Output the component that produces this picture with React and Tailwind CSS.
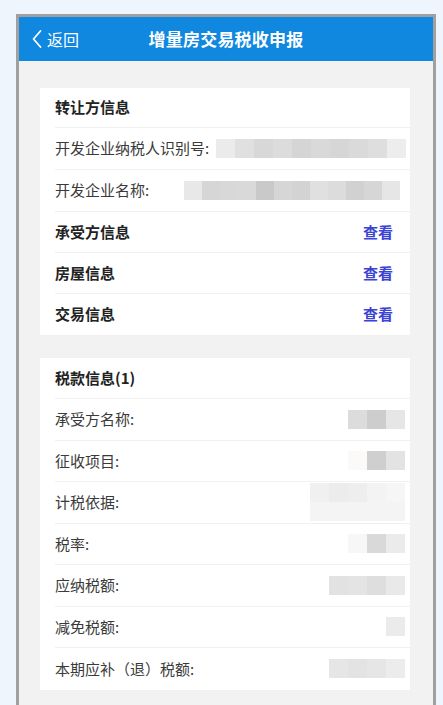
import React from "react";

const card1Rows = [
  {
    label: "开发企业纳税人识别号:",
    offset: 0,
    colors: ["#ebebeb", "#e0e0e0", "#d8d8d8", "#dcdcdc", "#d5d5d5", "#d9d9d9", "#d6d6d6", "#dadada", "#dedede", "#ededed"],
  },
  {
    label: "开发企业名称:",
    offset: -32,
    colors: ["#e8e8e8", "#d6d6d6", "#d8d8d8", "#d9d9d9", "#c9c9c9", "#d6d6d6", "#d3d3d3", "#e0e0e0", "#dcdcdc", "#d1d1d1", "#d6d6d6", "#e6e6e6"],
  },
];

const links = ["承受方信息", "房屋信息", "交易信息"];

const taxRows = [
  { label: "承受方名称:", colors: ["#dcdcdc", "#cdcdcd", "#e6e6e6"] },
  { label: "征收项目:", colors: ["#fbfaf8", "#cfcfcf", "#e3e3e3"] },
  { label: "计税依据:", colors: ["#f0f0f0", "#ececec", "#eeeeee", "#f3f3f3", "#f6f6f6"], tall: true },
  { label: "税率:", colors: ["#f7f7f7", "#d9d9d9", "#ebebeb"] },
  { label: "应纳税额:", colors: ["#e2e2e2", "#e4e4e4", "#dedede", "#e9e9e9"] },
  { label: "减免税额:", colors: ["#ebebeb"] },
  { label: "本期应补（退）税额:", colors: ["#e6e6e6", "#e3e3e3", "#e6e6e6", "#ececec"] },
];

// pixelated placeholder where the value was masked
function Blur({ colors, tall }) {
  return (
    <div className="flex flex-col">
      <div className="flex">
        {colors.map((c, i) => (
          <div key={i} className="w-[19px] h-[19px]" style={{ backgroundColor: c }} />
        ))}
      </div>
      {tall && (
        <div className="flex">
          {colors.map((c, i) => (
            <div key={i} className="w-[19px] h-[19px] bg-[#f4f4f4]" />
          ))}
        </div>
      )}
    </div>
  );
}

export default function App() {
  return (
    <div
      className="min-h-[705px] bg-[#eef5fd] pt-[14px] pl-[16px] pr-[7px]"
      style={{ fontFamily: '"Noto Sans CJK SC", "Noto Sans", sans-serif' }}
    >
      <div className="h-[691px] border-[3px] border-b-0 border-[#a0a0a0] bg-[#f2f2f2]">
        <div className="h-[44px] bg-[#1088e0] grid grid-cols-[1fr_auto_1fr] items-center text-white">
          <div className="flex items-center pl-[13px]">
            <svg width="10" height="20" viewBox="0 0 10 20" fill="none">
              <polyline points="8.5,2 1.5,10 8.5,18" stroke="white" strokeWidth="1.8" strokeLinejoin="round" strokeLinecap="round" />
            </svg>
            <span className="ml-[5px] text-[16px] leading-none">返回</span>
          </div>
          <div className="text-[17px] font-semibold tracking-[0.2px]">增量房交易税收申报</div>
          <div />
        </div>

        <div className="pt-[27px] pl-[21px] pr-[23px]">
          <div className="bg-white">
            <div className="h-[40px] ml-[15px] flex items-center border-b border-[#f1f1f1] text-[15px] font-bold text-[#222]">
              转让方信息
            </div>
            {card1Rows.map((r) => (
              <div key={r.label} className="h-[42px] ml-[15px] flex items-center border-b border-[#f1f1f1] text-[15px] text-[#3a3a3a]">
                <span className="w-[161px] shrink-0 whitespace-nowrap">{r.label}</span>
                <div className="flex" style={{ marginLeft: r.offset }}>
                  {r.colors.map((c, i) => (
                    <div key={i} className={`${r.offset ? "w-[18px]" : "w-[19px]"} h-[19px]`} style={{ backgroundColor: c }} />
                  ))}
                </div>
              </div>
            ))}
            {links.map((l, i) => (
              <div
                key={l}
                className={`h-[41px] ml-[15px] flex items-center justify-between pr-[17px] text-[15px] ${i < links.length - 1 ? "border-b border-[#f1f1f1]" : ""}`}
              >
                <span className="font-bold text-[#222]">{l}</span>
                <span className="font-bold text-[#3a43d6]">查看</span>
              </div>
            ))}
          </div>

          <div className="bg-white mt-[23px]">
            <div className="h-[41px] ml-[15px] flex items-center border-b border-[#f1f1f1] text-[15px] font-bold text-[#222]">
              税款信息(1)
            </div>
            {taxRows.map((r, i) => (
              <div
                key={r.label}
                className={`h-[41.5px] ml-[15px] pr-[5px] flex items-center justify-between text-[15px] text-[#3a3a3a] ${i < taxRows.length - 1 ? "border-b border-[#f1f1f1]" : ""}`}
              >
                <span className="whitespace-nowrap">{r.label}</span>
                <Blur colors={r.colors} tall={r.tall} />
              </div>
            ))}
          </div>
        </div>
      </div>
    </div>
  );
}
